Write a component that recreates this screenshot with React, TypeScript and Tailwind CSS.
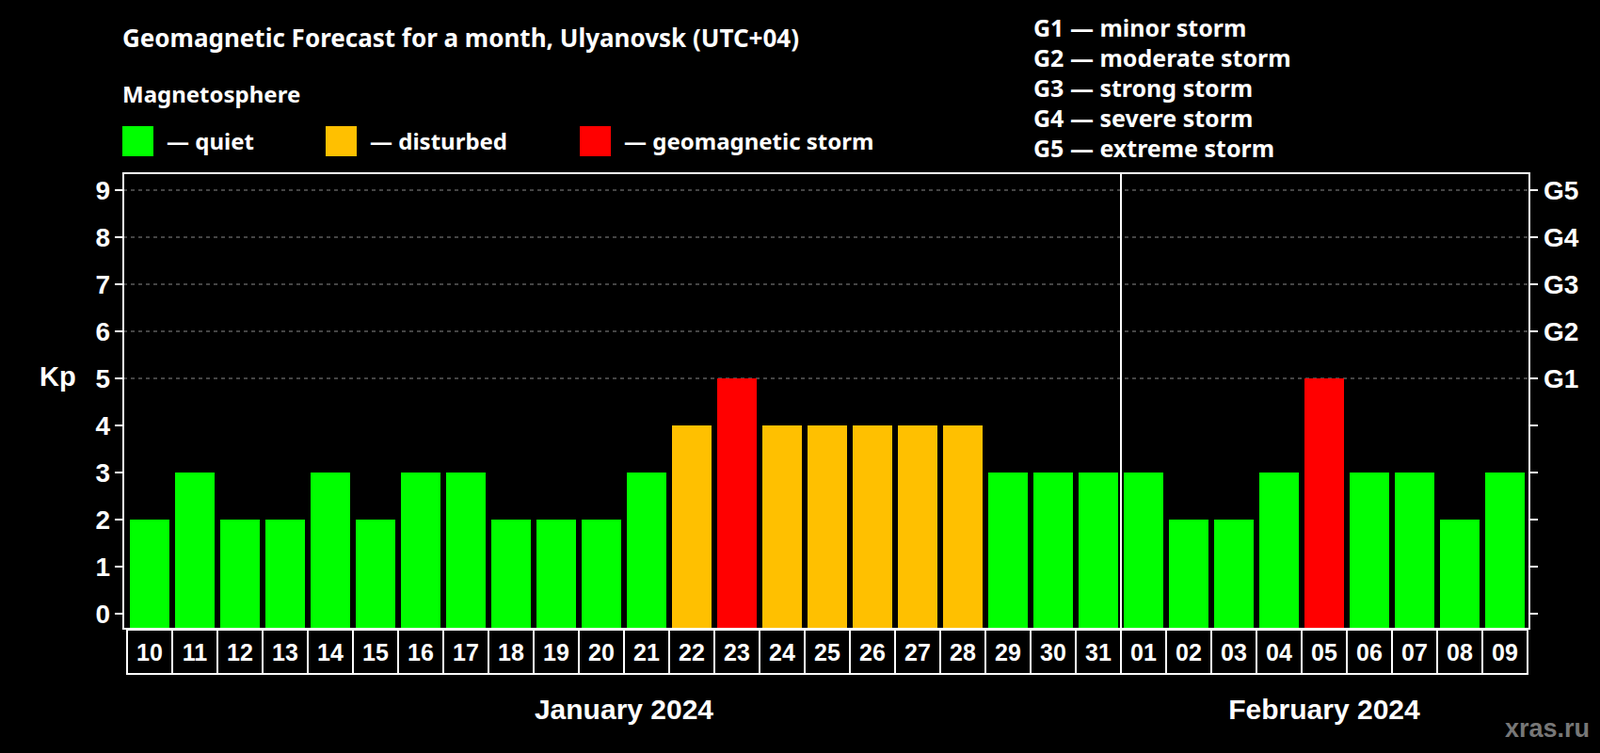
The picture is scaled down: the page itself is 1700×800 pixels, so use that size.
import React from 'react';

const days = [
  ['10', 2], ['11', 3], ['12', 2], ['13', 2], ['14', 3], ['15', 2], ['16', 3], ['17', 3],
  ['18', 2], ['19', 2], ['20', 2], ['21', 3], ['22', 4], ['23', 5], ['24', 4], ['25', 4],
  ['26', 4], ['27', 4], ['28', 4], ['29', 3], ['30', 3], ['31', 3], ['01', 3], ['02', 2],
  ['03', 2], ['04', 3], ['05', 5], ['06', 3], ['07', 3], ['08', 2], ['09', 3],
] as [string, number][];

const colorFor = (v: number) => (v >= 5 ? '#ff0000' : v === 4 ? '#ffc000' : '#00ff00');

const sans = '"Liberation Sans", Arial, sans-serif';

function Chart() {
  // y of Kp value, in page pixels
  const ky = (v: number) => 652 - v * 50;
  return (
    <svg width={1700} height={630} viewBox="0 170 1700 630" className="block">
      {/* grid */}
      {[5, 6, 7, 8, 9].map((v) => (
        <line key={v} x1={131} x2={1625} y1={ky(v)} y2={ky(v)} stroke="#8a8a8a" strokeWidth={1} strokeDasharray="4 4" />
      ))}
      {/* bars */}
      {days.map(([d, v], i) => (
        <rect key={d + i} x={138 + i * 48} y={ky(v)} width={42} height={668 - ky(v)} fill={colorFor(v)} />
      ))}
      {/* frame */}
      <rect x={131} y={184} width={1494} height={484} fill="none" stroke="#fff" strokeWidth={2} />
      <line x1={1191} x2={1191} y1={184} y2={668} stroke="#fff" strokeWidth={2} />
      {/* ticks + labels */}
      {Array.from({ length: 10 }, (_, v) => (
        <g key={v}>
          <line x1={122} x2={131} y1={ky(v)} y2={ky(v)} stroke="#fff" strokeWidth={2} />
          <line x1={1625} x2={1634} y1={ky(v)} y2={ky(v)} stroke="#fff" strokeWidth={2} />
          <text x={117} y={ky(v) + 10} textAnchor="end" fill="#fff" fontSize={28} fontWeight={700} fontFamily={sans}>{v}</text>
          {v >= 5 && (
            <text x={1640} y={ky(v) + 10} fill="#fff" fontSize={28} fontWeight={700} fontFamily={sans}>G{v - 4}</text>
          )}
        </g>
      ))}
      <text x={42} y={410} fill="#fff" fontSize={29} fontWeight={700} fontFamily={sans}>Kp</text>
      {/* day cells */}
      <rect x={135} y={669} width={1488} height={47} fill="none" stroke="#fff" strokeWidth={2} />
      {days.map(([d], i) => (
        <g key={'c' + i}>
          {i > 0 && <line x1={135 + i * 48} x2={135 + i * 48} y1={669} y2={716} stroke="#fff" strokeWidth={2} />}
          <text x={159 + i * 48} y={702} textAnchor="middle" fill="#fff" fontSize={25} fontWeight={700} fontFamily={sans}>{d}</text>
        </g>
      ))}
      <text x={663} y={764} textAnchor="middle" fill="#fff" fontSize={30} fontWeight={700} fontFamily={sans}>January 2024</text>
      <text x={1407} y={764} textAnchor="middle" fill="#fff" fontSize={30} fontWeight={700} fontFamily={sans}>February 2024</text>
      <text x={1689} y={783} textAnchor="end" fill="#777" fontSize={27} fontWeight={700} fontFamily={sans}>xras.ru</text>
    </svg>
  );
}

export default function App() {
  return (
    <div className="w-[1700px] h-[800px] bg-black text-white overflow-hidden font-['Liberation_Sans'] font-bold">
      <div className="flex h-[170px]">
        <div className="pl-[130px] pt-[24px] w-[1098px]">
          <h1 className="text-[26px] font-bold leading-[32px] whitespace-nowrap">Geomagnetic Forecast for a month, Ulyanovsk (UTC+04)</h1>
          <div className="mt-[30px] text-[24px] leading-[28px]">Magnetosphere</div>
          <div className="mt-[18px] flex items-center text-[24px] whitespace-nowrap">
            <span className="w-[33px] h-[32px] bg-[#00ff00]" />
            <span className="ml-[14px] w-[169px]">— quiet</span>
            <span className="w-[33px] h-[32px] bg-[#ffc000]" />
            <span className="ml-[14px] w-[223px]">— disturbed</span>
            <span className="w-[33px] h-[32px] bg-[#ff0000]" />
            <span className="ml-[14px]">— geomagnetic storm</span>
          </div>
        </div>
        <div className="pt-[13px] text-[25px] leading-[32px] whitespace-nowrap">
          <div>G1 — minor storm</div>
          <div>G2 — moderate storm</div>
          <div>G3 — strong storm</div>
          <div>G4 — severe storm</div>
          <div>G5 — extreme storm</div>
        </div>
      </div>
      <Chart />
    </div>
  );
}
